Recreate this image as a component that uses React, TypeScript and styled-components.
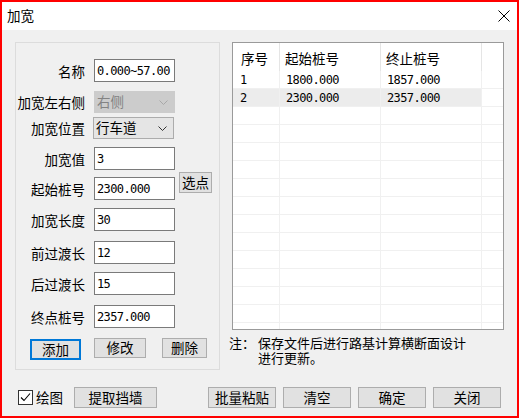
import React from "react";
import styled, { createGlobalStyle, css } from "styled-components";

const GlobalStyle = createGlobalStyle`
  html, body {
    margin: 0;
    padding: 0;
    background: #ffffff;
  }
  body {
    font-family: "Noto Sans CJK SC", "Noto Sans", sans-serif;
    color: #000000;
  }
`;

const UI_FONT = `"Noto Sans CJK SC", "Noto Sans", sans-serif`;
const NUM_FONT = `"DejaVu Sans Mono", "Liberation Mono", "Noto Sans CJK SC", monospace`;

const Window = styled.div`
  width: 519px;
  height: 418px;
  box-sizing: border-box;
  border: 2px solid #ff0000;
  display: flex;
  flex-direction: column;
  background: #ffffff;
`;

const TitleBar = styled.div`
  height: 28px;
  flex-shrink: 0;
  display: flex;
  align-items: center;
  justify-content: space-between;
  padding: 0 7px 0 5px;
  font-family: ${UI_FONT};
  font-size: 13.5px;
`;

const Title = styled.span`
  line-height: 1;
`;

const CloseIcon = styled.svg`
  display: block;
`;

const Body = styled.div`
  flex: 1;
  background: #f0f0f0;
  padding: 12px 13px 0 13px;
  display: flex;
  flex-direction: column;
`;

const Main = styled.div`
  display: flex;
  gap: 12px;
`;

const GroupBox = styled.div`
  width: 205px;
  height: 328px;
  box-sizing: border-box;
  border: 1px solid #dcdcdc;
  padding-top: 16px;
  display: flex;
  flex-direction: column;
`;

const FieldRow = styled.div<{ $mt: number }>`
  display: flex;
  align-items: center;
  margin-top: ${(p) => p.$mt}px;
`;

const Label = styled.label`
  width: 69px;
  margin-right: 9px;
  flex-shrink: 0;
  text-align: right;
  white-space: nowrap;
  font-family: ${UI_FONT};
  font-size: 13.5px;
  line-height: 1;
  padding-top: 2px;
`;

const TextBox = styled.input`
  width: 81px;
  height: 23px;
  box-sizing: border-box;
  margin: 0;
  border: 1px solid #7a7a7a;
  border-radius: 0;
  padding: 0 2px;
  background: #ffffff;
  font-family: ${NUM_FONT};
  font-size: 12px;
  letter-spacing: -0.6px;
  color: #000000;
  outline: none;
`;

const Combo = styled.div<{ $disabled?: boolean; $shift?: number }>`
  width: 81px;
  height: 22px;
  box-sizing: border-box;
  margin-left: ${(p) => p.$shift ?? 0}px;
  display: flex;
  align-items: center;
  justify-content: space-between;
  padding: 0 6px 0 2px;
  font-family: ${UI_FONT};
  font-size: 13.5px;
  line-height: 1;
  ${(p) =>
    p.$disabled
      ? css`
          background: #cccccc;
          border: 1px solid #cccccc;
          color: #838383;
        `
      : css`
          background: #e5e5e5;
          border: 1px solid #acacac;
          color: #000000;
        `}
`;

const Chevron = styled.svg`
  display: block;
  flex-shrink: 0;
`;

const Button = styled.button<{ $w: number; $h?: number; $default?: boolean; $mt?: number; $ml?: number }>`
  width: ${(p) => p.$w}px;
  height: ${(p) => p.$h ?? 20}px;
  margin: ${(p) => p.$mt ?? 0}px 0 0 ${(p) => p.$ml ?? 0}px;
  box-sizing: border-box;
  padding: 0;
  background: #e1e1e1;
  border: 1px solid #adadad;
  border-radius: 0;
  font-family: ${UI_FONT};
  font-size: 13.5px;
  line-height: 1;
  color: #000000;
  flex-shrink: 0;
  ${(p) =>
    p.$default &&
    css`
      border-color: #0078d7;
      box-shadow: inset 0 0 0 1px #0078d7;
    `}
`;

const PickButton = styled(Button)`
  align-self: flex-start;
  margin-top: -5px;
  margin-left: 4px;
`;

const ActionRow = styled.div`
  display: flex;
  align-items: flex-start;
  margin-top: 10px;
`;

const RightColumn = styled.div`
  display: flex;
  flex-direction: column;
  width: 272px;
`;

const ListView = styled.div`
  width: 272px;
  height: 288px;
  box-sizing: border-box;
  border: 1px solid #9a9a9a;
  background: #ffffff;
  overflow: hidden;
`;

const ListGrid = styled.div`
  display: grid;
  grid-template-columns: 47px 101px 101px 1fr;
`;

const HeadCell = styled.div<{ $first?: boolean; $last?: boolean }>`
  height: 28px;
  box-sizing: border-box;
  padding: 3px 0 0 ${(p) => (p.$first ? 8 : 5)}px;
  border-right: ${(p) => (p.$last ? "none" : "1px solid #e5e5e5")};
  display: flex;
  align-items: center;
  font-family: ${UI_FONT};
  font-size: 13.5px;
  line-height: 1;
`;

const Cell = styled.div<{ $first?: boolean; $last?: boolean; $selected?: boolean }>`
  height: 18px;
  box-sizing: border-box;
  padding-left: ${(p) => (p.$first ? 7 : 6)}px;
  border-right: ${(p) => (p.$last ? "none" : "1px solid #f0f0f0")};
  border-bottom: 1px solid #f0f0f0;
  background: ${(p) => (p.$selected ? "#ececec" : "#ffffff")};
  display: flex;
  align-items: center;
  font-family: ${NUM_FONT};
  font-size: 12px;
  letter-spacing: -0.6px;
  line-height: 1;
  white-space: nowrap;
`;

const Note = styled.div`
  display: flex;
  margin: 5px 0 0 -3px;
  font-family: ${UI_FONT};
  font-size: 13px;
  line-height: 15px;
`;

const NoteLead = styled.span`
  width: 29px;
  flex-shrink: 0;
`;

/* wraps after the sixteenth character, as the dialog does */
const NoteText = styled.p`
  margin: 0;
  width: 212px;
`;

const Footer = styled.div`
  display: flex;
  align-items: center;
  margin-top: 17px;
  padding: 0 3px;
`;

const CheckField = styled.label`
  display: flex;
  align-items: center;
  font-family: ${UI_FONT};
  font-size: 13.5px;
  line-height: 1;
`;

const CheckBox = styled.span`
  width: 15px;
  height: 15px;
  box-sizing: border-box;
  border: 1px solid #333333;
  background: #ffffff;
  display: flex;
  align-items: center;
  justify-content: center;
  margin-right: 3px;
`;

const FooterButtons = styled.div`
  display: flex;
  gap: 7px;
  margin-left: auto;
`;

type Field = { label: string; value: string; mt: number };

const textFields: Field[] = [
  { label: "加宽值", value: "3", mt: 8 },
  { label: "起始桩号", value: "2300.000", mt: 7 },
  { label: "加宽长度", value: "30", mt: 8 },
  { label: "前过渡长", value: "12", mt: 10 },
  { label: "后过渡长", value: "15", mt: 8 },
  { label: "终点桩号", value: "2357.000", mt: 10 },
];

const rows = [
  { no: "1", start: "1800.000", end: "1857.000" },
  { no: "2", start: "2300.000", end: "2357.000" },
];

const EMPTY_ROWS = 13;

const ChevronDown = ({ color }: { color: string }) => (
  <Chevron width="9" height="5" viewBox="0 0 9 5">
    <polyline points="0.5,0.5 4.5,4.5 8.5,0.5" fill="none" stroke={color} strokeWidth="1" />
  </Chevron>
);

export default function App() {
  return (
    <>
      <GlobalStyle />
      <Window>
        <TitleBar>
          <Title>加宽</Title>
          <CloseIcon width="12" height="12" viewBox="0 0 12 12">
            <path d="M0.5 0.5 L11.5 11.5 M11.5 0.5 L0.5 11.5" stroke="#000" strokeWidth="1" fill="none" />
          </CloseIcon>
        </TitleBar>
        <Body>
          <Main>
            <GroupBox>
              <FieldRow $mt={0}>
                <Label>名称</Label>
                <TextBox readOnly defaultValue="0.000~57.00" />
              </FieldRow>
              <FieldRow $mt={9}>
                <Label>加宽左右侧</Label>
                <Combo $disabled>
                  <span>右侧</span>
                  <ChevronDown color="#a8a8a8" />
                </Combo>
              </FieldRow>
              <FieldRow $mt={4}>
                <Label>加宽位置</Label>
                <Combo $shift={-1}>
                  <span>行车道</span>
                  <ChevronDown color="#333333" />
                </Combo>
              </FieldRow>
              {textFields.map((f) => (
                <FieldRow key={f.label} $mt={f.mt}>
                  <Label>{f.label}</Label>
                  <TextBox readOnly defaultValue={f.value} />
                  {f.label === "起始桩号" && (
                    <PickButton $w={33} $h={21}>
                      选点
                    </PickButton>
                  )}
                </FieldRow>
              ))}
              <ActionRow>
                <Button $w={51} $h={21} $default $mt={1} $ml={14}>
                  添加
                </Button>
                <Button $w={52} $ml={13}>
                  修改
                </Button>
                <Button $w={45} $ml={16}>
                  删除
                </Button>
              </ActionRow>
            </GroupBox>
            <RightColumn>
              <ListView>
                <ListGrid>
                  <HeadCell $first>序号</HeadCell>
                  <HeadCell>起始桩号</HeadCell>
                  <HeadCell>终止桩号</HeadCell>
                  <HeadCell $last />
                  {rows.map((r, i) => (
                    <React.Fragment key={r.no}>
                      <Cell $first $selected={i === 1}>{r.no}</Cell>
                      <Cell $selected={i === 1}>{r.start}</Cell>
                      <Cell $selected={i === 1}>{r.end}</Cell>
                      <Cell $last />
                    </React.Fragment>
                  ))}
                  {Array.from({ length: EMPTY_ROWS }).map((_, i) => (
                    <React.Fragment key={`e${i}`}>
                      <Cell $first />
                      <Cell />
                      <Cell />
                      <Cell $last />
                    </React.Fragment>
                  ))}
                </ListGrid>
              </ListView>
              <Note>
                <NoteLead>注：</NoteLead>
                <NoteText>保存文件后进行路基计算横断面设计进行更新。</NoteText>
              </Note>
            </RightColumn>
          </Main>
          <Footer>
            <CheckField>
              <CheckBox>
                <svg width="13" height="13" viewBox="0 0 13 13">
                  <polyline points="2,6.5 5,9.5 11,2.5" fill="none" stroke="#000" strokeWidth="1.1" />
                </svg>
              </CheckBox>
              绘图
            </CheckField>
            <Button $w={83} $h={21} $ml={11}>
              提取挡墙
            </Button>
            <FooterButtons>
              <Button $w={68} $h={21}>批量粘贴</Button>
              <Button $w={68} $h={21}>清空</Button>
              <Button $w={68} $h={21}>确定</Button>
              <Button $w={68} $h={21}>关闭</Button>
            </FooterButtons>
          </Footer>
        </Body>
      </Window>
    </>
  );
}
